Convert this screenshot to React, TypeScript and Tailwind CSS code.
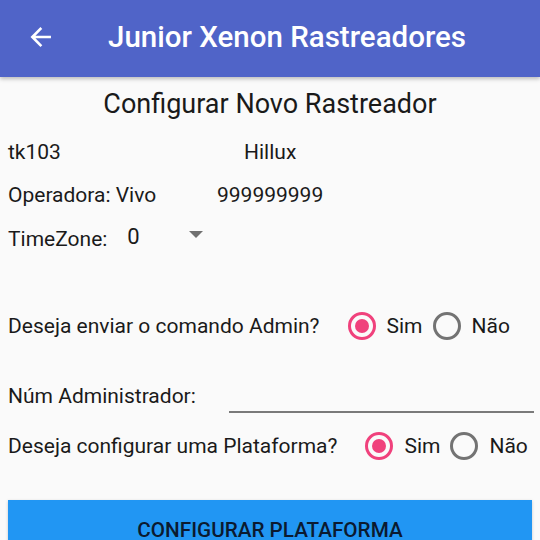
import React from "react";

function Radio({ checked }: { checked: boolean }) {
  return (
    <svg width="28" height="28" viewBox="0 0 28 28" className="shrink-0">
      <circle
        cx="14"
        cy="14"
        r="12.5"
        fill="none"
        stroke={checked ? "#f0417c" : "#737373"}
        strokeWidth="3"
      />
      {checked && <circle cx="14" cy="14" r="7" fill="#f0417c" />}
    </svg>
  );
}

function RadioGroup() {
  return (
    <div className="flex items-center ml-[28px]">
      <Radio checked />
      <span className="ml-[11px]">Sim</span>
      <span className="ml-[10px] flex">
        <Radio checked={false} />
      </span>
      <span className="ml-[11px]">Não</span>
    </div>
  );
}

export default function App() {
  return (
    <div
      className="w-[540px] h-[540px] overflow-hidden bg-[#fafafa] text-[#1a1a1a] flex flex-col"
      style={{ fontFamily: "Roboto, 'Liberation Sans', sans-serif" }}
    >
      <header className="h-[77px] shrink-0 bg-[#5064c8] flex items-center text-white shadow-[0_2px_4px_rgba(0,0,0,0.25)] relative z-10">
        <svg width="26" height="26" viewBox="0 0 24 24" className="ml-[28px] -mt-[3px]">
          <path
            d="M20 12H4.5M11.5 4.5L4 12l7.5 7.5"
            fill="none"
            stroke="white"
            strokeWidth="2.4"
            strokeLinecap="square"
          />
        </svg>
        <h1 className="ml-[54px] text-[29.5px] font-medium -mt-[3px]">
          Junior Xenon Rastreadores
        </h1>
      </header>

      <div className="flex flex-col text-[21px] leading-none">
        <div className="h-[54px] flex items-center justify-center text-[27px] pt-[1px]">
          Configurar Novo Rastreador
        </div>
        <div className="h-[42px] flex items-center pl-[8px]">
          <span className="w-[236px]">tk103</span>
          <span>Hillux</span>
        </div>
        <div className="h-[44px] flex items-center pl-[8px]">
          <span className="w-[209px]">Operadora: Vivo</span>
          <span>999999999</span>
        </div>
        <div className="h-[44px] flex items-center pl-[8px]">
          <span>TimeZone:</span>
          <span className="ml-[20px] text-[22px] -mt-[4px]">0</span>
          <svg width="14" height="8" viewBox="0 0 14 8" className="ml-[49px] -mt-[8px]">
            <path d="M0 0h14L7 7z" fill="#707070" />
          </svg>
        </div>
        <div className="h-[40px]" />
        <div className="h-[50px] flex items-center pl-[8px]">
          <span>Deseja enviar o comando Admin?</span>
          <RadioGroup />
        </div>
        <div className="h-[20px]" />
        <div className="h-[50px] flex items-center pl-[8px] relative">
          <span>Núm Administrador:</span>
          <div className="ml-[33px] flex-1 mr-[6px] self-end mb-[8px] h-[2px] bg-[#7a7a7a]" />
        </div>
        <div className="h-[50px] flex items-center pl-[8px]">
          <span>Deseja configurar uma Plataforma?</span>
          <RadioGroup />
        </div>
        <div className="h-[29px]" />
        <div className="px-[8px]">
          <button className="w-full h-[56px] bg-[#2196f3] text-[#0b1a30] text-[20.7px] font-medium flex items-start justify-center pt-[20px] shadow-[0_1px_3px_rgba(0,0,0,0.2)]">
            CONFIGURAR PLATAFORMA
          </button>
        </div>
      </div>
    </div>
  );
}
